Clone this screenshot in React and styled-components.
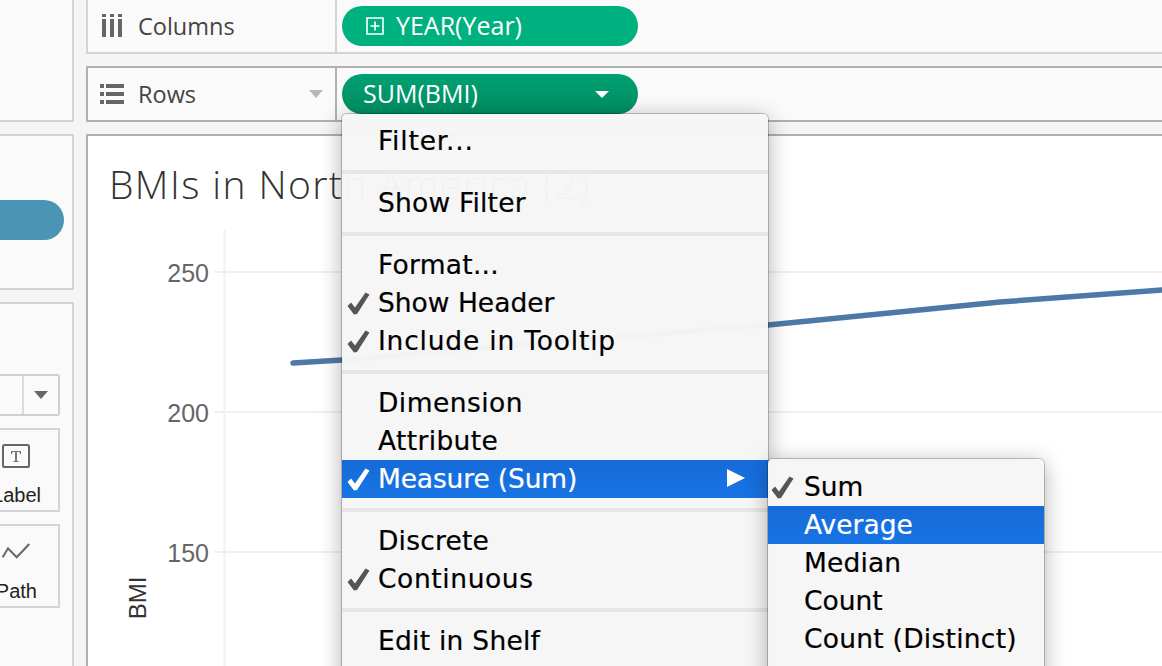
import styled, { createGlobalStyle } from "styled-components";

const GlobalStyle = createGlobalStyle`
    html, body {
        margin: 0;
        padding: 0;
        background: #f5f5f5;
    }
`;

const Page = styled.div`
    position: relative;
    width: 1162px;
    height: 666px;
    overflow: hidden;
    display: flex;
    gap: 12px;
    background: #f5f5f5;
    font-family: "Open Sans", sans-serif;
`;
const Sidebar = styled.div`
    width: 74px;
    flex-shrink: 0;
    display: flex;
    flex-direction: column;
    gap: 12px;
`;
const SidePanel = styled.div`
    box-sizing: border-box;
    height: ${(p) => p.$height || "auto"};
    flex: ${(p) => (p.$grow ? 1 : "none")};
    background: #fafafa;
    border-right: 2px solid #d4d4d4;
    border-top: ${(p) => (p.$noTop ? "none" : "2px solid #d4d4d4")};
    border-bottom: ${(p) => (p.$noBottom ? "none" : "2px solid #d4d4d4")};
`;
const BluePill = styled.div`
    width: 64px;
    height: 40px;
    margin-top: 64px;
    border-radius: 0 20px 20px 0;
    background: #4a95b5;
`;
const MarksType = styled.div`
    box-sizing: border-box;
    width: 60px;
    height: 42px;
    margin-top: 70px;
    display: flex;
    justify-content: flex-end;
    background: #fafafa;
    border: 2px solid #cfcfcf;
    border-left: none;
    border-radius: 0 3px 3px 0;
`;
const MarksArrow = styled.div`
    box-sizing: border-box;
    width: 36px;
    border-left: 2px solid #dcdcdc;
    display: flex;
    align-items: center;
    justify-content: center;
    &::after {
        content: "";
        border-left: 7px solid transparent;
        border-right: 7px solid transparent;
        border-top: 8px solid #666;
    }
`;
const MarkCard = styled.div`
    box-sizing: border-box;
    width: 60px;
    height: 84px;
    margin-top: 12px;
    border: 2px solid #d4d4d4;
    border-left: none;
    display: flex;
    flex-direction: column;
    align-items: flex-end;
    overflow: hidden;
`;
const MarkIcon = styled.svg`
    display: block;
    width: 28px;
    height: 24px;
    margin: 14px 28px 0 0;
    flex-shrink: 0;
`;
const MarkLabel = styled.span`
    margin: 13px ${(p) => p.$inset}px 0 0;
    font-family: "Liberation Sans", sans-serif;
    font-size: 20px;
    line-height: 28px;
    color: #222;
    white-space: nowrap;
`;
const Main = styled.div`
    flex: 1;
    min-width: 0;
    display: flex;
    flex-direction: column;
    gap: 12px;
`;
const Shelf = styled.div`
    box-sizing: border-box;
    height: ${(p) => p.$height};
    display: flex;
    background: #fafafa;
    border-left: 2px solid ${(p) => p.$line};
    border-top: ${(p) => (p.$noTop ? "none" : `2px solid ${p.$line}`)};
    border-bottom: 2px solid ${(p) => p.$line};
`;
const ShelfHead = styled.div`
    box-sizing: border-box;
    width: 249px;
    padding-left: ${(p) => p.$pad}px;
    padding-right: 12px;
    display: flex;
    align-items: center;
    border-right: 2px solid ${(p) => p.$line};
    font-size: 23.5px;
    color: #444;
`;
const ShelfIcon = styled.svg`
    display: block;
    flex-shrink: 0;
    width: 24px;
    height: 24px;
    margin-right: ${(p) => p.$gap}px;
    fill: #666;
`;
const ShelfName = styled.span`
    flex: 1;
    margin-top: -1px;
`;
const ShelfCaret = styled.span`
    border-left: 7px solid transparent;
    border-right: 7px solid transparent;
    border-top: 8px solid #b8b8b8;
`;
const ShelfBody = styled.div`
    flex: 1;
    padding-left: 5px;
    padding-top: ${(p) => p.$top}px;
`;
const Pill = styled.div`
    box-sizing: border-box;
    width: 296px;
    height: 40px;
    padding: 0 ${(p) => (p.$caret ? 29 : 20)}px 0 ${(p) => (p.$caret ? 21 : 24)}px;
    border-radius: 20px;
    display: flex;
    align-items: center;
    gap: 12px;
    background: ${(p) => (p.$caret ? "linear-gradient(#00a070, #008e63)" : "#00b180")};
    color: #fff;
    font-size: 25px;
`;
const PillName = styled.span`
    flex: 1;
    margin-top: -2px;
`;
const PillCaret = styled.span`
    border-left: 7px solid transparent;
    border-right: 7px solid transparent;
    border-top: 7px solid #fff;
`;
const PlusIcon = styled.svg`
    display: block;
    width: 18px;
    height: 18px;
    flex-shrink: 0;
`;
const ChartPanel = styled.div`
    flex: 1;
    min-height: 0;
    background: #fff;
    border-left: 2px solid #b0b0b0;
    border-top: 2px solid #b0b0b0;
`;
const ChartTitle = styled.div`
    box-sizing: border-box;
    height: 94px;
    padding: 22px 0 0 21px;
    font-size: 39px;
    line-height: 52px;
    letter-spacing: 1.4px;
    font-weight: 300;
    color: #333;
    white-space: nowrap;
`;
const ChartSvg = styled.svg`
    display: block;
    width: 1074px;
    height: 436px;
`;
const AxisText = styled.text`
    font-family: "Liberation Sans", sans-serif;
    font-size: 25px;
    fill: #666;
    text-anchor: end;
`;
const AxisTitle = styled.text`
    font-family: "Liberation Sans", sans-serif;
    font-size: 24px;
    fill: #333;
    text-anchor: middle;
`;
const Menu = styled.div`
    position: absolute;
    box-sizing: border-box;
    left: ${(p) => p.$left}px;
    top: ${(p) => p.$top}px;
    width: ${(p) => p.$width}px;
    padding-top: ${(p) => p.$padTop}px;
    padding-bottom: 40px;
    background: rgba(246, 246, 246, 0.975);
    border-radius: 5px 5px 0 0;
    box-shadow: 0 0 0 1px rgba(0, 0, 0, 0.22), 0 4px 22px rgba(0, 0, 0, 0.32);
    font-family: "DejaVu Sans", sans-serif;
    font-size: 26.5px;
    -webkit-text-stroke: 0.2px currentColor;
    color: #000;
`;
const Item = styled.div`
    position: relative;
    height: 38px;
    line-height: 37px;
    padding-left: 36px;
    white-space: nowrap;
    letter-spacing: ${(p) => p.$tracking}px;
    background: ${(p) => (p.$active ? "linear-gradient(#156bd8, #1874e4)" : "transparent")};
    color: ${(p) => (p.$active ? "#fff" : "#000")};
`;
const Check = styled.svg`
    position: absolute;
    left: ${(p) => p.$left}px;
    top: 8px;
    width: 23px;
    height: 23px;
    fill: ${(p) => (p.$active ? "#fff" : "#555")};
`;
const SubArrow = styled.span`
    position: absolute;
    right: 23px;
    top: 9px;
    border-top: 9px solid transparent;
    border-bottom: 9px solid transparent;
    border-left: 18px solid #fff;
`;
const Separator = styled.div`
    height: 4px;
    margin: 10px 0;
    background: #e6e6e6;
`;

const MenuCheck = ({ left, active }) => (
    <Check viewBox="0 0 23 23" $left={left} $active={active}>
        <path d="M0.5 14 L4 10.5 L8 15.5 L18.5 0.5 L22.5 2.5 L10 22 L7 22.5 Z" />
    </Check>
);

const Row = ({ label, checked, active, arrow, tracking = 0.25, checkLeft = 5 }) => (
    <Item $tracking={tracking} $active={active}>
        {checked && <MenuCheck left={checkLeft} active={active} />}
        {label}
        {arrow && <SubArrow />}
    </Item>
);

const App = () => {
    return (
        <>
            <GlobalStyle />
            <Page>
                <Sidebar>
                    <SidePanel $height="122px" $noTop />
                    <SidePanel $height="156px">
                        <BluePill />
                    </SidePanel>
                    <SidePanel $grow $noBottom>
                        <MarksType>
                            <MarksArrow />
                        </MarksType>
                        <MarkCard>
                            <MarkIcon viewBox="0 0 28 24">
                                <rect x="1" y="1" width="26" height="22" rx="1.5" fill="none" stroke="#666" strokeWidth="2" />
                                <path d="M9 7h10v3h-1l-.5-2H15v9h1.5v1h-5v-1H13V8h-2.5L10 10H9z" fill="#777" />
                            </MarkIcon>
                            <MarkLabel $inset={17}>Label</MarkLabel>
                        </MarkCard>
                        <MarkCard>
                            <MarkIcon viewBox="0 0 28 24">
                                <path d="M0.7 17.3 L6 8.3 L14.7 17.3 L27.3 4" fill="none" stroke="#666" strokeWidth="2" />
                            </MarkIcon>
                            <MarkLabel $inset={21}>Path</MarkLabel>
                        </MarkCard>
                    </SidePanel>
                </Sidebar>
                <Main>
                    <Shelf $height="54px" $line="#d4d4d4" $noTop>
                        <ShelfHead $line="#d4d4d4" $pad={14}>
                            <ShelfIcon viewBox="0 0 24 24" $gap={12}>
                                <path d="M0 0h4v3H0zM8 0h4v3H8zM16 0h4v3h-4zM0 5h4v18H0zM8 5h4v18H8zM16 5h4v18h-4z" />
                            </ShelfIcon>
                            <ShelfName>Columns</ShelfName>
                        </ShelfHead>
                        <ShelfBody $top={6}>
                            <Pill>
                                <PlusIcon viewBox="0 0 18 18">
                                    <path d="M1 1h16v16H1z M9 4.5v9 M4.5 9h9" fill="none" stroke="#fff" strokeWidth="1.6" />
                                </PlusIcon>
                                <PillName>YEAR(Year)</PillName>
                            </Pill>
                        </ShelfBody>
                    </Shelf>
                    <Shelf $height="56px" $line="#b0b0b0">
                        <ShelfHead $line="#b0b0b0" $pad={12}>
                            <ShelfIcon viewBox="0 0 24 24" $gap={14}>
                                <path d="M0 2h4v4H0zM6 2h18v4H6zM0 10h4v4H0zM6 10h18v4H6zM0 18h4v4H0zM6 18h18v4H6z" />
                            </ShelfIcon>
                            <ShelfName>Rows</ShelfName>
                            <ShelfCaret />
                        </ShelfHead>
                        <ShelfBody $top={6}>
                            <Pill $caret>
                                <PillName>SUM(BMI)</PillName>
                                <PillCaret />
                            </Pill>
                        </ShelfBody>
                    </Shelf>
                    <ChartPanel>
                        <ChartTitle>BMIs in North America (2)</ChartTitle>
                        <ChartSvg viewBox="88 230 1074 436">
                            <path d="M214 272H1162M214 412H1162M214 552H1162" stroke="#f0f0f0" strokeWidth="2" fill="none" />
                            <path d="M224.5 230V666" stroke="#f2f2f2" strokeWidth="2" fill="none" />
                            <AxisText x="209" y="282">250</AxisText>
                            <AxisText x="209" y="422">200</AxisText>
                            <AxisText x="209" y="562">150</AxisText>
                            <AxisTitle transform="translate(146 598) rotate(-90)">BMI</AxisTitle>
                            <polyline
                                points="293,363 342,360 768,325 1000,302 1162,290"
                                fill="none"
                                stroke="#4e79a7"
                                strokeWidth="5.5"
                                strokeLinecap="round"
                                strokeLinejoin="round"
                            />
                        </ChartSvg>
                    </ChartPanel>
                </Main>
                <Menu $left={342} $top={114} $width={426} $padTop={8}>
                    <Row label="Filter..." tracking={0.8} />
                    <Separator />
                    <Row label="Show Filter" tracking={0.2} />
                    <Separator />
                    <Row label="Format..." />
                    <Row label="Show Header" checked tracking={0} />
                    <Row label="Include in Tooltip" checked tracking={0.8} />
                    <Separator />
                    <Row label="Dimension" tracking={0.45} />
                    <Row label="Attribute" tracking={0.35} />
                    <Row label="Measure (Sum)" checked active arrow tracking={-0.15} />
                    <Separator />
                    <Row label="Discrete" tracking={0.2} />
                    <Row label="Continuous" checked tracking={0.6} />
                    <Separator />
                    <Row label="Edit in Shelf" />
                </Menu>
                <Menu $left={768} $top={459} $width={276} $padTop={9}>
                    <Row label="Sum" checked checkLeft={3} tracking={0} />
                    <Row label="Average" active tracking={0} />
                    <Row label="Median" tracking={0.15} />
                    <Row label="Count" tracking={0} />
                    <Row label="Count (Distinct)" />
                </Menu>
            </Page>
        </>
    );
};

export default App;
